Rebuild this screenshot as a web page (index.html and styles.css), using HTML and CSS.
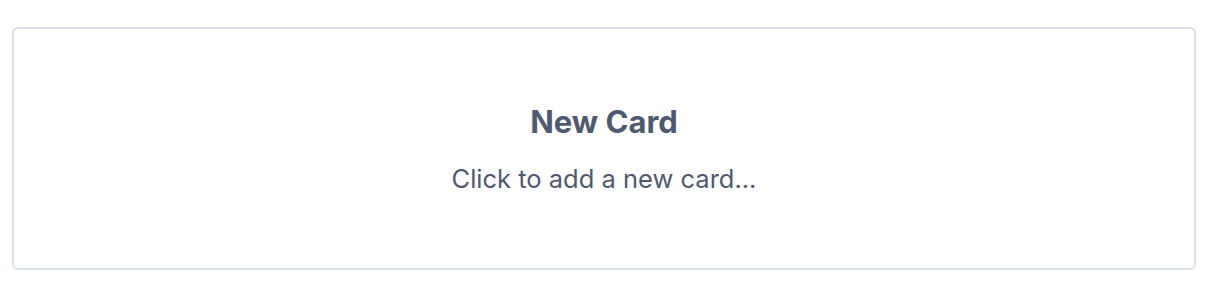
FILE: index.html
```html
<!DOCTYPE html>
<html lang="en">
<head>
    <meta charset="UTF-8">
    <title>New Card</title>
    <link rel="stylesheet" href="styles.css">
</head>
<body>
    <div class="card new-card">
        <h2 class="card-title">New Card</h2>
        <p class="card-hint">Click to add a new card...</p>
    </div>
</body>
</html>
```

FILE: styles.css
```css
body {
    margin: 0;
    padding: 27px 18px 0 12px;
    font-family: Inter, "Noto Sans", sans-serif;
    background-color: #fff;
    color: #4a5568;
}
.card {
    border: 2px solid #d9e1ea;
    border-radius: 6px;
    height: 239px;
    display: flex;
    flex-direction: column;
    align-items: center;
    justify-content: center;
}
.card-title {
    margin: 0 0 23px;
    font-size: 31px;
    line-height: 37px;
    font-weight: 700;
    color: #4f5a70;
}
.card-hint {
    margin: 0;
    font-size: 25.5px;
    line-height: 31px;
    color: #4f5a70;
}
```
